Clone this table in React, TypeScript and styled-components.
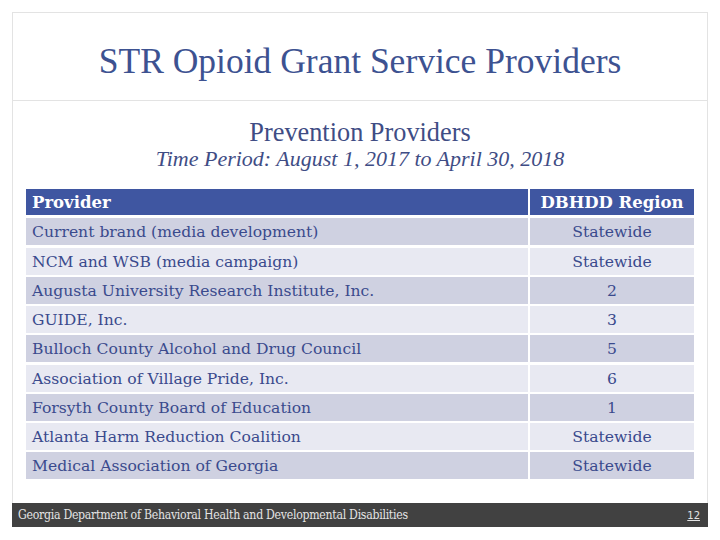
import React from "react";
import styled, { createGlobalStyle } from "styled-components";

const Global = createGlobalStyle`
  html, body { margin: 0; padding: 0; background: #ffffff; }
  body { font-family: "Liberation Serif", serif; }
`;

const Frame = styled.div`
  box-sizing: border-box;
  margin: 12px 0 0 12px;
  width: 696px;
  height: 515px;
  border: 1px solid #e3e3e3;
  border-bottom: none;
  display: flex;
  flex-direction: column;
`;

const TitleBar = styled.header`
  height: 87px;
  border-bottom: 1px solid #e3e3e3;
  display: flex;
  align-items: center;
  justify-content: center;
`;

const Title = styled.h1`
  margin: 0;
  padding-top: 8px;
  font-family: "Liberation Serif", serif;
  font-weight: normal;
  font-size: 35.5px;
  color: #3d5291;
`;

const Content = styled.main`
  flex: 1;
  display: flex;
  flex-direction: column;
  align-items: center;
  padding-top: 18px;
`;

const Subtitle = styled.h2`
  margin: 0;
  font-family: "Liberation Serif", serif;
  font-weight: normal;
  font-size: 26.3px;
  line-height: 28px;
  color: #3f4d85;
`;

const Period = styled.p`
  margin: 0;
  font-family: "Liberation Serif", serif;
  font-style: italic;
  font-size: 22px;
  line-height: 24px;
  color: #3f4d85;
`;

const Table = styled.div`
  margin-top: 18px;
  width: 668px;
  display: grid;
  grid-template-columns: 502px 164px;
  column-gap: 2px;
  row-gap: 2.25px;
`;

const HeadCell = styled.div<{ $center?: boolean }>`
  height: 26px;
  margin-bottom: 1px;
  background: #3f56a1;
  color: #ffffff;
  font-family: "DejaVu Serif", serif;
  font-weight: bold;
  font-size: 16.5px;
  line-height: 27px;
  padding-left: ${(p) => (p.$center ? "0" : "6px")};
  text-align: ${(p) => (p.$center ? "center" : "left")};
`;

const Cell = styled.div<{ $dark: boolean; $center?: boolean }>`
  height: 27px;
  background: ${(p) => (p.$dark ? "#cfd1e1" : "#e8e9f2")};
  color: #3a4a8d;
  font-family: "DejaVu Serif", serif;
  font-size: 15.6px;
  line-height: 28px;
  white-space: nowrap;
  padding-left: ${(p) => (p.$center ? "0" : "6px")};
  text-align: ${(p) => (p.$center ? "center" : "left")};
`;

const Footer = styled.footer`
  height: 24px;
  background: #414141;
  display: flex;
  align-items: center;
  justify-content: space-between;
  padding: 0 8px 0 6px;
  margin: 0 -1px;
`;

const FooterText = styled.span`
  font-family: "DejaVu Serif Condensed", "DejaVu Serif", serif;
  font-stretch: condensed;
  font-size: 12.2px;
  letter-spacing: -0.28px;
  color: #e4e4e4;
`;

const PageNum = styled.span`
  font-family: "DejaVu Sans", sans-serif;
  font-size: 10px;
  color: #e4e4e4;
  text-decoration: underline;
`;

const rows: [string, string][] = [
  ["Current brand (media development)", "Statewide"],
  ["NCM and WSB (media campaign)", "Statewide"],
  ["Augusta University Research Institute, Inc.", "2"],
  ["GUIDE, Inc.", "3"],
  ["Bulloch County Alcohol and Drug Council", "5"],
  ["Association of Village Pride, Inc.", "6"],
  ["Forsyth County Board of Education", "1"],
  ["Atlanta Harm Reduction Coalition", "Statewide"],
  ["Medical Association of Georgia", "Statewide"],
];

export default function App() {
  return (
    <>
      <Global />
      <Frame>
        <TitleBar>
          <Title>STR Opioid Grant Service Providers</Title>
        </TitleBar>
        <Content>
          <Subtitle>Prevention Providers</Subtitle>
          <Period>Time Period: August 1, 2017 to April 30, 2018</Period>
          <Table>
            <HeadCell>Provider</HeadCell>
            <HeadCell $center>DBHDD Region</HeadCell>
            {rows.map(([name, region], i) => (
              <React.Fragment key={name}>
                <Cell $dark={i % 2 === 0}>{name}</Cell>
                <Cell $dark={i % 2 === 0} $center>
                  {region}
                </Cell>
              </React.Fragment>
            ))}
          </Table>
        </Content>
        <Footer>
          <FooterText>
            Georgia Department of Behavioral Health and Developmental Disabilities
          </FooterText>
          <PageNum>12</PageNum>
        </Footer>
      </Frame>
    </>
  );
}
